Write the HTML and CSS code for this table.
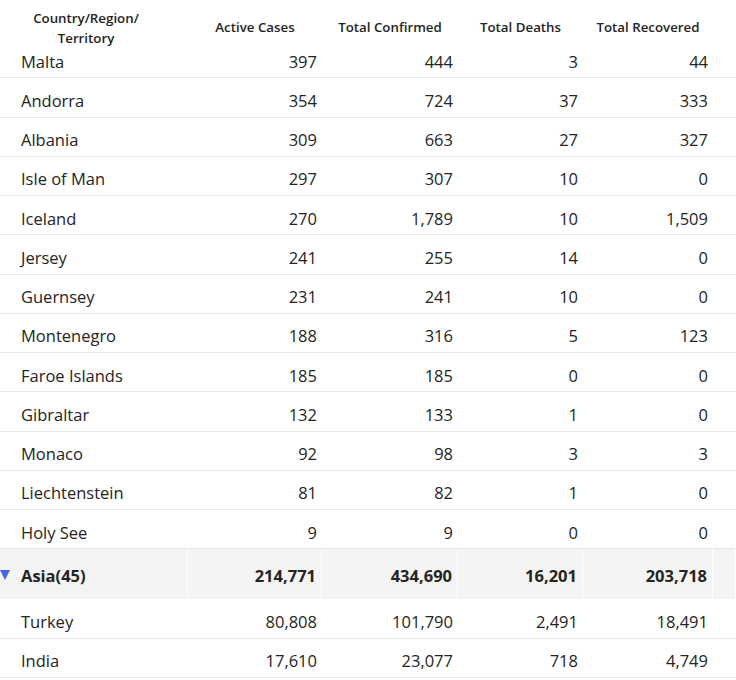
FILE: index.html
```html
<!DOCTYPE html>
<html>
<head>
<meta charset="utf-8">
<link rel="stylesheet" href="styles.css">
</head>
<body>
<div class="table">
  <div class="row head">
    <div class="hc first">Country/Region/<br>Territory</div>
    <div class="hc">Active Cases</div>
    <div class="hc">Total Confirmed</div>
    <div class="hc">Total Deaths</div>
    <div class="hc">Total Recovered</div>
    <div class="hc"></div>
  </div>
  <div class="row"><div class="c name">Malta</div><div class="c">397</div><div class="c">444</div><div class="c">3</div><div class="c">44</div><div></div></div>
  <div class="row"><div class="c name">Andorra</div><div class="c">354</div><div class="c">724</div><div class="c">37</div><div class="c">333</div><div></div></div>
  <div class="row"><div class="c name">Albania</div><div class="c">309</div><div class="c">663</div><div class="c">27</div><div class="c">327</div><div></div></div>
  <div class="row"><div class="c name">Isle of Man</div><div class="c">297</div><div class="c">307</div><div class="c">10</div><div class="c">0</div><div></div></div>
  <div class="row"><div class="c name">Iceland</div><div class="c">270</div><div class="c">1,789</div><div class="c">10</div><div class="c">1,509</div><div></div></div>
  <div class="row"><div class="c name">Jersey</div><div class="c">241</div><div class="c">255</div><div class="c">14</div><div class="c">0</div><div></div></div>
  <div class="row"><div class="c name">Guernsey</div><div class="c">231</div><div class="c">241</div><div class="c">10</div><div class="c">0</div><div></div></div>
  <div class="row"><div class="c name">Montenegro</div><div class="c">188</div><div class="c">316</div><div class="c">5</div><div class="c">123</div><div></div></div>
  <div class="row"><div class="c name">Faroe Islands</div><div class="c">185</div><div class="c">185</div><div class="c">0</div><div class="c">0</div><div></div></div>
  <div class="row"><div class="c name">Gibraltar</div><div class="c">132</div><div class="c">133</div><div class="c">1</div><div class="c">0</div><div></div></div>
  <div class="row"><div class="c name">Monaco</div><div class="c">92</div><div class="c">98</div><div class="c">3</div><div class="c">3</div><div></div></div>
  <div class="row"><div class="c name">Liechtenstein</div><div class="c">81</div><div class="c">82</div><div class="c">1</div><div class="c">0</div><div></div></div>
  <div class="row"><div class="c name">Holy See</div><div class="c">9</div><div class="c">9</div><div class="c">0</div><div class="c">0</div><div></div></div>
  <div class="row group">
    <div class="c name"><span class="tri"></span>Asia(45)</div>
    <div class="c">214,771</div><div class="c">434,690</div><div class="c">16,201</div><div class="c">203,718</div><div class="c"></div>
  </div>
  <div class="row"><div class="c name">Turkey</div><div class="c">80,808</div><div class="c">101,790</div><div class="c">2,491</div><div class="c">18,491</div><div></div></div>
  <div class="row"><div class="c name">India</div><div class="c">17,610</div><div class="c">23,077</div><div class="c">718</div><div class="c">4,749</div><div></div></div>
</div>
</body>
</html>
```
FILE: styles.css
```css
html, body {
  margin: 0;
  padding: 0;
  background: #ffffff;
}
body {
  font-family: "Open Sans", "Noto Sans", "Liberation Sans", sans-serif;
  color: #252423;
  overflow: hidden;
}
.table {
  width: 736px;
}
.row {
  display: grid;
  grid-template-columns: 188px 134px 136px 125px 130px 1fr;
  height: 39.25px;
  box-sizing: border-box;
  border-bottom: 1px solid #e8e8e8;
}
.row.head {
  border-bottom: none;
  height: 39px;
}
.hc {
  font-size: 13.3px;
  font-weight: 600;
  text-align: center;
  padding-top: 18px;
  line-height: 18px;
  white-space: nowrap;
}
.hc.first {
  padding-top: 8px;
  line-height: 20px;
  padding-right: 16px;
  position: relative;
  z-index: 1;
}
.c {
  font-size: 16.5px;
  line-height: 20px;
  padding-top: 12.5px;
  text-align: right;
  padding-right: 5px;
  white-space: nowrap;
}
.c.name {
  text-align: left;
  padding-left: 21px;
  padding-right: 0;
}
.row.group {
  height: 51px;
  background: #f4f4f4;
  border-top: 1px solid #e8e8e8;
  border-bottom: none;
  margin-top: -1px;
}
.row.group .c {
  font-weight: 700;
  padding-top: 16.5px;
  border-right: 1px solid #ffffff;
}
.row.group .c.name {
  position: relative;
}
.tri {
  position: absolute;
  left: 0;
  top: 21px;
  width: 0;
  height: 0;
  border-left: 5px solid transparent;
  border-right: 5px solid transparent;
  border-top: 10px solid #4a64e0;
}
```
